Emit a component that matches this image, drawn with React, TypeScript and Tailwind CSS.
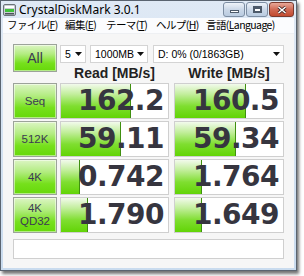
import React from 'react';

const rows = [
  { label: 'Seq', read: '162.2', readBar: 70, write: '160.5', writeBar: 71 },
  { label: '512K', read: '59.11', readBar: 60, write: '59.34', writeBar: 61 },
  { label: '4K', read: '0.742', readBar: 19, write: '1.764', writeBar: 27 },
  { label: '4K\nQD32', read: '1.790', readBar: 27, write: '1.649', writeBar: 27 },
];

const menus = [
  { text: 'ファイル(', key: 'F', w: 'w-[58px]' },
  { text: '編集(', key: 'E', w: 'w-[41px]' },
  { text: 'テーマ(', key: 'T', w: 'w-[50px]' },
  { text: 'ヘルプ(', key: 'H', w: 'w-[50px]' },
  { text: '言語(', key: 'L', rest: 'anguage', w: 'w-[70px]' },
];

function GreenButton({ label, big }: { label: string; big?: boolean }) {
  return (
    <div className="w-[44px] h-full border border-[#9ca39a] bg-[linear-gradient(to_bottom,#dcf5c4_0%,#b2ec80_35%,#76e01c_70%,#66d80a_100%)] flex items-center justify-center shadow-[inset_0_0_0_1px_rgba(255,255,255,0.5)]">
      <span
        className={`${big ? 'text-[14px]' : 'text-[11.5px]'} leading-[13px] text-[#3b3a52] text-center whitespace-pre-line font-['Liberation_Sans',sans-serif]`}
      >
        {label}
      </span>
    </div>
  );
}

function ResultBox({ value, bar, width }: { value: string; bar: number; width: string }) {
  return (
    <div className={`${width} h-full border border-[#cfcfcf] bg-white relative flex items-center justify-end pr-[4px]`}>
      <div
        className="absolute left-0 top-0 bottom-0 border-r border-[#3f8f10] bg-[linear-gradient(to_bottom,#f2faec_0%,#c2ee9c_30%,#7fde30_65%,#62d406_100%)]"
        style={{ width: bar }}
      />
      <span className="relative font-['DejaVu_Sans',sans-serif] font-bold text-[28px] leading-none tracking-[-0.5px] text-[#36353f]">
        {value}
      </span>
    </div>
  );
}

function Combo({ text, width }: { text: string; width: string }) {
  return (
    <div className={`${width} h-full bg-white border border-[#d4d4d4] flex items-center justify-between pl-[4px] pr-[3px]`}>
      <span className="text-[10.5px] leading-none text-black font-['Liberation_Sans',sans-serif]">{text}</span>
      <svg width="7" height="4" viewBox="0 0 7 4" className="shrink-0">
        <path d="M0 0h7L3.5 4z" fill="#111" />
      </svg>
    </div>
  );
}

export default function App() {
  return (
    <div className="w-[304px] h-[276px] bg-white overflow-hidden">
      <div className="w-[297px] h-[271px] border border-[#5a6470] bg-[linear-gradient(to_bottom,#dfe9f5,#c9dbee)] flex flex-col shadow-[2px_3px_3px_rgba(0,0,0,0.55)]">
        {/* Title bar */}
        <div className="h-[17px] flex items-center pl-[2px] pr-[2px]">
          <svg width="13" height="12" viewBox="0 0 13 12" className="shrink-0">
            <rect x="0.5" y="0.5" width="12" height="11" rx="1.5" fill="#c9cfd4" stroke="#6b7379" />
            <rect x="2" y="2" width="9" height="2" fill="#ffffff" />
            <rect x="2" y="5" width="9" height="3" fill="#3fc23a" />
            <rect x="2" y="9" width="9" height="1.5" fill="#4c5358" />
          </svg>
          <span className="ml-[3px] text-[12px] text-black font-['Noto_Sans',sans-serif] leading-none">
            CrystalDiskMark 3.0.1
          </span>
          <div className="ml-auto flex items-center gap-[1px] self-start mt-[1px]">
            <div className="w-[22px] h-[15px] rounded-[3px] border border-[#7d8ea3] bg-[linear-gradient(to_bottom,#eef3f9,#cbd8e8_50%,#b9cbe0)] flex items-end justify-center pb-[3px]">
              <div className="w-[9px] h-[3px] bg-white border border-[#4d5a6a]" />
            </div>
            <div className="w-[22px] h-[15px] rounded-[3px] border border-[#7d8ea3] bg-[linear-gradient(to_bottom,#eef3f9,#cbd8e8_50%,#b9cbe0)] flex items-center justify-center">
              <div className="w-[9px] h-[7px] border-[2px] border-t-[3px] border-[#4d5a6a] bg-white" />
            </div>
            <div className="w-[25px] h-[15px] rounded-[3px] border border-[#7a3a2e] bg-[linear-gradient(to_bottom,#e8a898,#d06a55_50%,#c24a30)] flex items-center justify-center">
              <svg width="10" height="8" viewBox="0 0 10 8">
                <path d="M1.5 1l7 6M8.5 1l-7 6" stroke="#3a2020" strokeWidth="3" />
                <path d="M1.5 1l7 6M8.5 1l-7 6" stroke="#fff" strokeWidth="1.6" />
              </svg>
            </div>
          </div>
        </div>

        {/* Client area */}
        <div className="flex-1 mx-[2px] mb-[2px] bg-[#f6f6f6] flex flex-col">
          {/* Menu */}
          <div className="h-[16px] bg-[#fbfcfe] flex items-center pl-[4px] text-[10.5px] leading-none tracking-[-0.6px] text-black font-['Noto_Sans_CJK_JP',sans-serif] border-b border-[#eef0f3]">
            {menus.map((m) => (
              <span key={m.key} className={`${m.w} shrink-0 whitespace-nowrap`}>
                {m.text}
                <span className="underline">{m.key}</span>
                {m.rest}
                )
              </span>
            ))}
          </div>

          {/* Content */}
          <div className="pl-[10px] pt-[10px] flex flex-col">
            <div className="flex h-[39px]">
              <div className="h-[28px]">
                <GreenButton label="All" big />
              </div>
              <div className="ml-[3px] flex flex-col">
                <div className="flex h-[18px] mt-[1px]">
                  <Combo text="5" width="w-[26px]" />
                  <div className="ml-[4px] h-full">
                    <Combo text="1000MB" width="w-[58px]" />
                  </div>
                  <div className="ml-[5px] h-full">
                    <Combo text="D: 0% (0/1863GB)" width="w-[131px]" />
                  </div>
                </div>
                <div className="flex h-[20px] items-center font-['Liberation_Sans',sans-serif] font-bold text-[14px] text-[#222]">
                  <div className="w-[109px] text-center">Read [MB/s]</div>
                  <div className="ml-[5px] w-[110px] text-center">Write [MB/s]</div>
                </div>
              </div>
            </div>

            {rows.map((r) => (
              <div key={r.label} className="flex h-[36px] mb-[2px]">
                <GreenButton label={r.label} />
                <div className="ml-[3px] h-full">
                  <ResultBox value={r.read} bar={r.readBar} width="w-[109px]" />
                </div>
                <div className="ml-[5px] h-full">
                  <ResultBox value={r.write} bar={r.writeBar} width="w-[110px]" />
                </div>
              </div>
            ))}

            <div className="mt-[4px] w-[271px] h-[20px] bg-white border border-[#cfcfcf]" />
          </div>
        </div>
      </div>
    </div>
  );
}
